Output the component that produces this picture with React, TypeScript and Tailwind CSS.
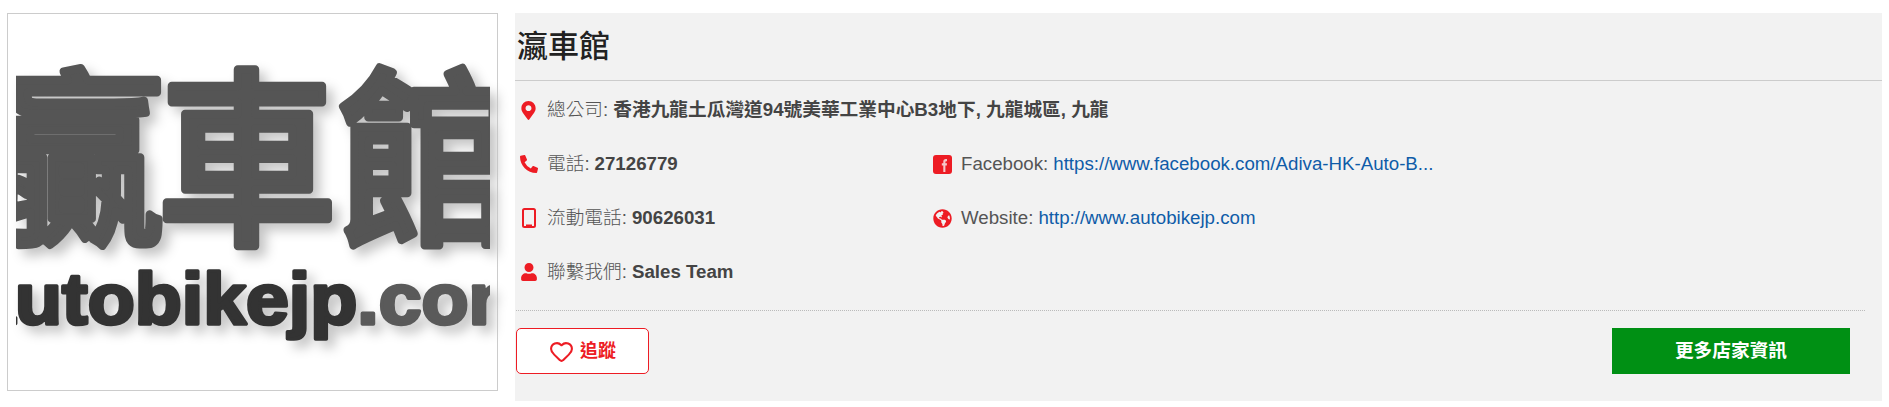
import { FaGlobeAmericas, FaMapMarkerAlt, FaPhoneAlt, FaUser } from "react-icons/fa";
import { Heart } from "lucide-react";

const sans = "font-['Liberation_Sans','Noto_Sans_CJK_TC',sans-serif]";

function Logo() {
  return (
    <div className="w-[491px] h-[378px] border border-[#cccccc] bg-white px-2 shrink-0">
      <svg viewBox="0 0 474 376" className="w-[474px] h-[376px] [filter:drop-shadow(7px_7px_6px_#c4c4c4)]">
        <text
          x="-30 142 322"
          y="203"
          transform="scale(1 1.06)"
          fontFamily="'Noto Sans CJK TC', sans-serif"
          fontWeight="500"
          fontSize="178"
          fill="#555555"
          stroke="#555555"
          strokeWidth="8"
          strokeLinejoin="round"
        >
          贏車館
        </text>
        <text
          x="-41"
          y="310"
          transform="scale(1.07 1)"
          fontFamily="'Liberation Sans', sans-serif"
          fontWeight="700"
          fontSize="72"
          fill="#333333"
          stroke="#333333"
          strokeWidth="3.5"
          strokeLinejoin="round"
        >
          autobikejp
          <tspan fill="#5a5a5a" stroke="#5a5a5a">.com</tspan>
        </text>
      </svg>
    </div>
  );
}

function MobileIcon() {
  return (
    <svg width="14" height="20" viewBox="0 0 14 20">
      <rect x="1" y="1" width="12" height="18" rx="1.5" fill="none" stroke="currentColor" strokeWidth="2" />
      <rect x="4" y="16.5" width="6" height="2" fill="currentColor" />
    </svg>
  );
}

function FacebookIcon() {
  return (
    <svg width="19" height="19" viewBox="0 0 19 19">
      <rect width="19" height="19" rx="3" fill="currentColor" />
      <path d="M10.3 17V10.5H8.8V8.2h1.5V6.6c0-1.7 1-2.6 2.5-2.6h1.2v2.2h-.8c-.6 0-.8.3-.8.8v1.2h1.6l-.2 2.3h-1.4V17z" fill="#f6c8ca" />
    </svg>
  );
}

function Row({ icon, label, children }: { icon: React.ReactNode; label: string; children: React.ReactNode }) {
  return (
    <div className="h-[54px] flex items-center text-[18.7px] text-[#555555] whitespace-nowrap">
      <span className="w-[31px] flex justify-center pr-[6px] text-[#ed1c24]">{icon}</span>
      <span className="font-light">{label}:</span>
      <span className="ml-[5px]">{children}</span>
    </div>
  );
}

const Bold = ({ children }: { children: React.ReactNode }) => (
  <b className="font-bold text-[#444444]">{children}</b>
);

const Link = ({ children }: { children: React.ReactNode }) => (
  <a href="#" className="text-[#0f5ca8]">{children}</a>
);

export default function App() {
  return (
    <div className={`flex items-start gap-[17px] pl-[7px] pt-[13px] pr-[7px] bg-white h-[407px] ${sans}`}>
      <Logo />
      <div className="flex-1 h-[388px] bg-[#f2f2f2]">
        <h1 className="h-[68px] pl-[2px] pb-[4px] flex items-center border-b border-[#cccccc] text-[31px] text-[#222222] font-['Noto_Sans_CJK_TC',sans-serif] font-medium">
          瀛車館
        </h1>
        <div className="pl-[1px] pt-[2px] pb-[11px]">
          <Row icon={<FaMapMarkerAlt size={19} />} label="總公司">
            <Bold>香港九龍土瓜灣道94號美華工業中心B3地下, 九龍城區, 九龍</Bold>
          </Row>
          <div className="grid grid-cols-[414px_1fr]">
            <div>
              <Row icon={<FaPhoneAlt size={18} />} label="電話">
                <Bold>27126779</Bold>
              </Row>
              <Row icon={<MobileIcon />} label="流動電話">
                <Bold>90626031</Bold>
              </Row>
              <Row icon={<FaUser size={18} />} label="聯繫我們">
                <Bold>Sales Team</Bold>
              </Row>
            </div>
            <div>
              <Row icon={<FacebookIcon />} label="Facebook">
                <Link>https://www.facebook.com/Adiva-HK-Auto-B...</Link>
              </Row>
              <Row icon={<FaGlobeAmericas size={19} />} label="Website">
                <Link>http://www.autobikejp.com</Link>
              </Row>
            </div>
          </div>
        </div>
        <div className="mr-[17px] ml-[1px] border-t border-dotted border-[#bbbbbb] pt-[17px] flex justify-between pr-[15px]">
          <button className="w-[133px] h-[46px] flex items-center justify-center gap-[6px] bg-white border border-[#ed1c24] rounded-[5px] text-[#ed1c24] text-[18px] font-bold">
            <Heart size={25} strokeWidth={2} />
            追蹤
          </button>
          <button className="w-[238px] h-[46px] bg-[#009014] text-white text-[18.7px] font-bold">
            更多店家資訊
          </button>
        </div>
      </div>
    </div>
  );
}
